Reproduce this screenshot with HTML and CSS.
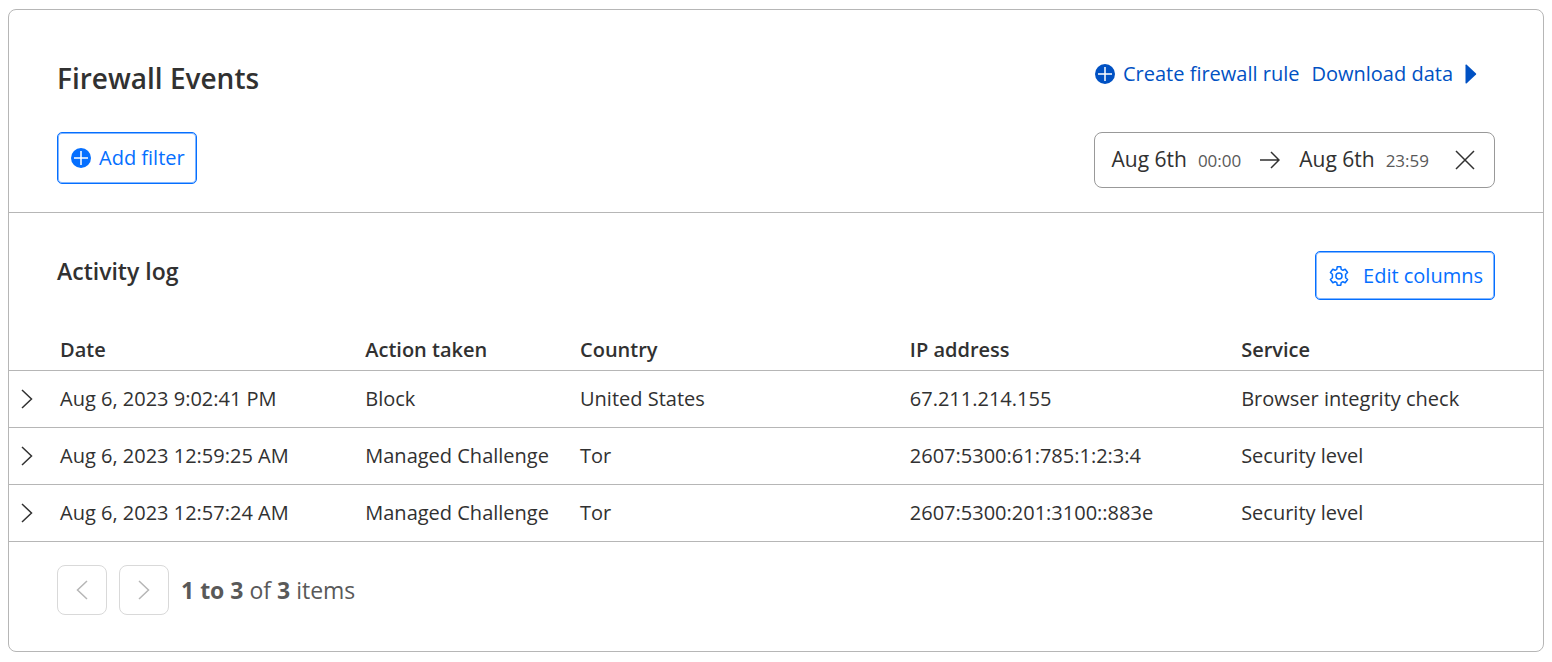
FILE: index.html
```
<!DOCTYPE html>
<html lang="en">
<head>
<meta charset="utf-8">
<meta name="viewport" content="width=device-width, initial-scale=1">
<title>Firewall Events</title>
<link rel="stylesheet" href="styles.css">
</head>
<body>
<main class="card">
  <header class="card-header">
    <div class="header-row title-row">
      <h1 class="title">Firewall Events</h1>
      <nav class="actions">
        <a class="action" href="#create">
          <svg class="icon-plus" viewBox="0 0 20 20" aria-hidden="true"><circle cx="10" cy="10" r="10" fill="currentColor"/><path d="M10 3v14M3 10h14" stroke="#fff" stroke-width="1.5"/></svg>
          Create firewall rule
        </a>
        <a class="action download" href="#download">
          Download data
          <svg class="icon-caret" viewBox="0 0 12 20" aria-hidden="true"><path d="M0.5 1.2Q0.5 0 1.5 0.6L11 9.4Q11.5 10 11 10.6L1.5 19.4Q0.5 20 0.5 18.8Z" fill="currentColor"/></svg>
        </a>
      </nav>
    </div>
    <div class="header-row">
      <button class="button add-filter" type="button">
        <svg class="icon-plus" viewBox="0 0 20 20" aria-hidden="true"><circle cx="10" cy="10" r="10" fill="currentColor"/><path d="M10 3v14M3 10h14" stroke="#fff" stroke-width="1.5"/></svg>
        Add filter
      </button>
      <div class="range">
        <button class="range-part" type="button">Aug 6th <span class="time">00:00</span></button>
        <svg class="icon-arrow" viewBox="0 0 20 18" fill="none" stroke="currentColor" stroke-width="1.5" aria-hidden="true"><path d="M0 9h19M11 1l8 8-8 8"/></svg>
        <button class="range-part" type="button">Aug 6th <span class="time">23:59</span></button>
        <button class="range-clear" type="button" aria-label="Clear dates">
          <svg class="icon-close" viewBox="0 0 20 20" fill="none" stroke="currentColor" stroke-width="1.5" aria-hidden="true"><path d="M1 1l18 18M19 1L1 19"/></svg>
        </button>
      </div>
    </div>
  </header>

  <section class="log">
    <div class="log-header">
      <h2 class="subtitle">Activity log</h2>
      <button class="button edit-columns" type="button">
        <svg class="icon-gear" viewBox="0 0 20 20" fill="none" stroke="currentColor" stroke-width="1.5" stroke-linejoin="round" aria-hidden="true"><path d="M8.2 0.8H11.8L12.2 3.4L13.9 4.3L16.2 3.3L18.6 6.5L16.6 8.3V11.7L18.6 13.5L16.2 16.7L13.9 15.7L12.2 16.6L11.8 19.2H8.2L7.8 16.6L6.1 15.7L3.8 16.7L1.4 13.5L3.4 11.7V8.3L1.4 6.5L3.8 3.3L6.1 4.3L7.8 3.4Z"/><circle cx="10" cy="10" r="3"/></svg>
        Edit columns
      </button>
    </div>
    <table class="events">
      <colgroup>
        <col class="col-toggle"><col class="col-date"><col class="col-action"><col class="col-country"><col class="col-ip"><col>
      </colgroup>
      <thead>
        <tr><td></td><th scope="col">Date</th><th scope="col">Action taken</th><th scope="col">Country</th><th scope="col">IP address</th><th scope="col">Service</th></tr>
      </thead>
      <tbody>
        <tr>
          <td class="toggle-cell"><button class="toggle" type="button" aria-label="Expand event"><svg class="icon-chevron" viewBox="0 0 12 20" fill="none" stroke="currentColor" stroke-width="1.5" aria-hidden="true"><path d="M1 1l9.500 9-9.500 9"/></svg></button></td>
          <td>Aug 6, 2023 9:02:41 PM</td><td>Block</td><td>United States</td><td>67.211.214.155</td><td>Browser integrity check</td>
        </tr>
        <tr>
          <td class="toggle-cell"><button class="toggle" type="button" aria-label="Expand event"><svg class="icon-chevron" viewBox="0 0 12 20" fill="none" stroke="currentColor" stroke-width="1.5" aria-hidden="true"><path d="M1 1l9.500 9-9.500 9"/></svg></button></td>
          <td>Aug 6, 2023 12:59:25 AM</td><td>Managed Challenge</td><td>Tor</td><td>2607:5300:61:785:1:2:3:4</td><td>Security level</td>
        </tr>
        <tr>
          <td class="toggle-cell"><button class="toggle" type="button" aria-label="Expand event"><svg class="icon-chevron" viewBox="0 0 12 20" fill="none" stroke="currentColor" stroke-width="1.5" aria-hidden="true"><path d="M1 1l9.500 9-9.500 9"/></svg></button></td>
          <td>Aug 6, 2023 12:57:24 AM</td><td>Managed Challenge</td><td>Tor</td><td>2607:5300:201:3100::883e</td><td>Security level</td>
        </tr>
      </tbody>
    </table>
  </section>

  <footer class="pager">
    <button class="page-button" type="button" disabled aria-label="Previous page"><svg class="icon-chevron" viewBox="0 0 12 20" fill="none" stroke="currentColor" stroke-width="1.5" aria-hidden="true"><path d="M11 1l-9.500 9 9.500 9"/></svg></button>
    <button class="page-button" type="button" disabled aria-label="Next page"><svg class="icon-chevron" viewBox="0 0 12 20" fill="none" stroke="currentColor" stroke-width="1.5" aria-hidden="true"><path d="M1 1l9.500 9-9.500 9"/></svg></button>
    <p class="summary"><b>1 to 3</b> of <b>3</b> items</p>
  </footer>
</main>
</body>
</html>
```
FILE: styles.css
```
* {
  box-sizing: border-box;
}

body {
  margin: 9px 8px;
  background: #fff;
  color: #313131;
  font: 20px/28px "Open Sans", "Noto Sans", sans-serif;
}

h1, h2, p {
  margin: 0;
}

button {
  font: inherit;
  color: inherit;
  background: none;
  border: 0;
  padding: 0;
  cursor: pointer;
}

svg {
  display: block;
  flex: none;
}

.card {
  border: 1px solid #b6b6b6;
  border-radius: 8px;
}

.card-header {
  padding: 48px 48px 24px;
  border-bottom: 1px solid #b6b6b6;
}

.header-row {
  display: flex;
  justify-content: space-between;
  align-items: flex-start;
}

.title-row {
  padding-bottom: 34px;
}

.title {
  font-size: 28px;
  line-height: 40px;
  font-weight: 600;
}

.actions {
  display: flex;
  gap: 12px;
  padding: 2px 18px 0 0;
}

.action {
  display: flex;
  align-items: center;
  gap: 8px;
  color: #0051c3;
  text-decoration: none;
}

.download {
  gap: 12px;
}

.button {
  display: flex;
  align-items: center;
  border: 1px solid #056fff;
  box-shadow: inset 0 0 0 1px #83b7ff;
  border-radius: 5px;
  color: #056fff;
}

.add-filter {
  gap: 8px;
  height: 52px;
  padding: 0 11px 0 13px;
}

.edit-columns {
  gap: 14px;
  height: 49px;
  padding: 0 11px 0 13px;
}

.range {
  display: flex;
  align-items: center;
  height: 56px;
  padding: 0 19px 0 17px;
  border: 1px solid #999;
  border-radius: 8px;
  font-size: 21px;
}

.range-part {
  display: flex;
  align-items: baseline;
  gap: 11px;
}

.time {
  font-size: 17px;
  color: #595959;
}

.icon-plus, .icon-gear {
  width: 20px;
  height: 20px;
}

.icon-caret, .icon-chevron {
  width: 12px;
  height: 20px;
}

.icon-arrow {
  width: 20px;
  height: 18px;
  margin: 0 19px;
}

.icon-close {
  width: 20px;
  height: 20px;
}

.range-clear {
  margin-left: 26px;
}

.log-header {
  display: flex;
  justify-content: space-between;
  align-items: flex-start;
  padding: 38px 48px 28px;
}

.subtitle {
  font-size: 23px;
  line-height: 40px;
  font-weight: 600;
}

.events {
  width: 100%;
  table-layout: fixed;
  border-collapse: collapse;
}

.col-toggle { width: 45px; }
.col-date { width: 19.9%; }
.col-action { width: 14%; }
.col-country { width: 21.5%; }
.col-ip { width: 21.6%; }

.events th {
  padding: 8px 6px 6px;
  text-align: left;
  font-weight: 600;
}

.events td {
  padding: 14px 6px;
}

.events thead td {
  padding: 0;
}

.events tr {
  border-bottom: 1px solid #b6b6b6;
}

.events .toggle-cell {
  padding: 0 12px;
}

.toggle {
  display: block;
}

.pager {
  display: flex;
  align-items: center;
  gap: 12px;
  padding: 23px 48px 36px;
}

.page-button {
  display: flex;
  align-items: center;
  justify-content: center;
  width: 50px;
  height: 50px;
  border: 1px solid #d9d9d9;
  border-radius: 8px;
  color: #b6b6b6;
}

.summary {
  font-size: 23px;
  color: #595959;
}
```
